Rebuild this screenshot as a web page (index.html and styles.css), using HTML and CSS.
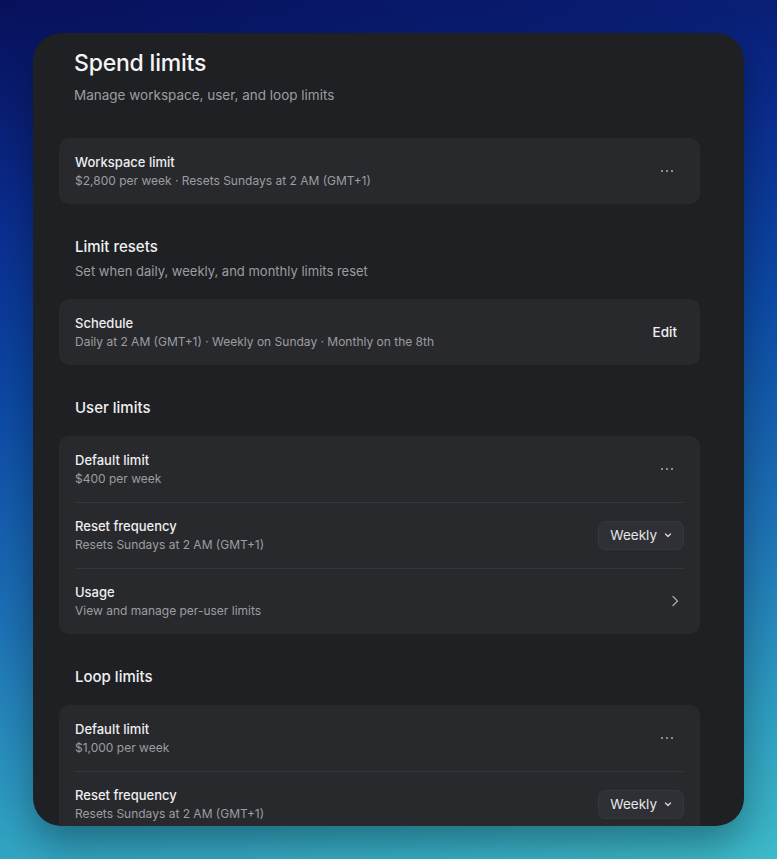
FILE: index.html
```html
<!DOCTYPE html>
<html lang="en">
<head>
    <meta charset="UTF-8">
    <meta name="viewport" content="width=device-width, initial-scale=1.0">
    <title>Spend limits</title>
    <link rel="stylesheet" href="styles.css">
</head>
<body>
    <div class="panel">
        <div class="content">
            <div class="page-header">
                <h1>Spend limits</h1>
                <p class="page-sub">Manage workspace, user, and loop limits</p>
            </div>

            <div class="card">
                <div class="row">
                    <div class="row-text">
                        <div class="row-title">Workspace limit</div>
                        <div class="row-sub">$2,800 per week · Resets Sundays at 2 AM (GMT+1)</div>
                    </div>
                    <button class="icon-btn" aria-label="More">
                        <svg width="16" height="16" viewBox="0 0 16 16"><circle cx="3" cy="8" r="1.1"/><circle cx="8" cy="8" r="1.1"/><circle cx="13" cy="8" r="1.1"/></svg>
                    </button>
                </div>
            </div>

            <div class="section">
                <div class="section-head">
                    <h2>Limit resets</h2>
                    <p class="section-sub">Set when daily, weekly, and monthly limits reset</p>
                </div>
                <div class="card">
                    <div class="row">
                        <div class="row-text">
                            <div class="row-title">Schedule</div>
                            <div class="row-sub">Daily at 2 AM (GMT+1) · Weekly on Sunday · Monthly on the 8th</div>
                        </div>
                        <button class="text-btn">Edit</button>
                    </div>
                </div>
            </div>

            <div class="section">
                <div class="section-head">
                    <h2>User limits</h2>
                </div>
                <div class="card">
                    <div class="row">
                        <div class="row-text">
                            <div class="row-title">Default limit</div>
                            <div class="row-sub">$400 per week</div>
                        </div>
                        <button class="icon-btn" aria-label="More">
                            <svg width="16" height="16" viewBox="0 0 16 16"><circle cx="3" cy="8" r="1.1"/><circle cx="8" cy="8" r="1.1"/><circle cx="13" cy="8" r="1.1"/></svg>
                        </button>
                    </div>
                    <div class="row">
                        <div class="row-text">
                            <div class="row-title">Reset frequency</div>
                            <div class="row-sub">Resets Sundays at 2 AM (GMT+1)</div>
                        </div>
                        <button class="select">
                            Weekly
                            <svg width="10" height="10" viewBox="0 0 10 10"><path d="M2.5 4l2.5 2.5L7.5 4"/></svg>
                        </button>
                    </div>
                    <div class="row">
                        <div class="row-text">
                            <div class="row-title">Usage</div>
                            <div class="row-sub">View and manage per-user limits</div>
                        </div>
                        <span class="chevron">
                            <svg width="16" height="16" viewBox="0 0 16 16"><path d="M6 3.5l4.5 4.5L6 12.5"/></svg>
                        </span>
                    </div>
                </div>
            </div>

            <div class="section">
                <div class="section-head">
                    <h2>Loop limits</h2>
                </div>
                <div class="card">
                    <div class="row">
                        <div class="row-text">
                            <div class="row-title">Default limit</div>
                            <div class="row-sub">$1,000 per week</div>
                        </div>
                        <button class="icon-btn" aria-label="More">
                            <svg width="16" height="16" viewBox="0 0 16 16"><circle cx="3" cy="8" r="1.1"/><circle cx="8" cy="8" r="1.1"/><circle cx="13" cy="8" r="1.1"/></svg>
                        </button>
                    </div>
                    <div class="row">
                        <div class="row-text">
                            <div class="row-title">Reset frequency</div>
                            <div class="row-sub">Resets Sundays at 2 AM (GMT+1)</div>
                        </div>
                        <button class="select">
                            Weekly
                            <svg width="10" height="10" viewBox="0 0 10 10"><path d="M2.5 4l2.5 2.5L7.5 4"/></svg>
                        </button>
                    </div>
                </div>
            </div>
        </div>
    </div>
</body>
</html>
```

FILE: styles.css
```css
* {
    margin: 0;
    padding: 0;
    box-sizing: border-box;
}
html, body {
    height: 100%;
}
body {
    font-family: Inter, "Noto Sans", "Liberation Sans", sans-serif;
    background: linear-gradient(172deg, #08105a 0%, #0a2c8e 22%, #0c4aa6 42%, #1d72b6 65%, #2f9fc2 85%, #3dbbca 100%);
    color: #ececee;
    padding: 33px;
    overflow: hidden;
}
.panel {
    height: 100%;
    background: #1f2023;
    border-radius: 28px;
    overflow: hidden;
    box-shadow: 0 18px 40px rgba(0, 0, 0, 0.35);
}
.content {
    padding: 15px 44px 0 26px;
}
.page-header {
    padding: 0 15px;
    margin-bottom: 33px;
}
h1 {
    font-size: 23px;
    line-height: 30px;
    font-weight: 500;
    color: #f4f4f5;
    letter-spacing: -0.2px;
}
.page-sub {
    margin-top: 7px;
    font-size: 13.5px;
    line-height: 20px;
    color: #9c9da2;
}
.section {
    margin-top: 33px;
}
.section-head {
    padding: 0 16px;
    margin-bottom: 18px;
}
h2 {
    font-size: 15px;
    line-height: 20px;
    font-weight: 500;
    color: #f0f0f2;
}
.section-sub {
    margin-top: 4px;
    font-size: 13px;
    line-height: 20px;
    color: #9c9da2;
}
.card {
    background: #28292d;
    border-radius: 10px;
    padding: 0 16px;
}
.row {
    display: flex;
    align-items: center;
    justify-content: space-between;
    padding: 14px 0;
}
.row + .row {
    border-top: 1px solid #35363b;
    padding-top: 13px;
}
.row-title {
    font-size: 13px;
    line-height: 20px;
    font-weight: 500;
    color: #eeeef0;
}
.row-sub {
    font-size: 12px;
    line-height: 18px;
    color: #9c9da2;
}
button {
    font-family: inherit;
    border: none;
    background: none;
    cursor: pointer;
}
.icon-btn {
    width: 28px;
    height: 28px;
    margin-right: 3px;
    display: flex;
    align-items: center;
    justify-content: center;
    fill: #a3a4a9;
}
.text-btn {
    font-size: 13.5px;
    font-weight: 500;
    color: #f0f0f2;
    padding: 6px 7px;
}
.select {
    display: flex;
    align-items: center;
    gap: 6px;
    height: 29px;
    padding: 0 10px 0 11px;
    background: #2f3035;
    border: 1px solid #36373c;
    border-radius: 7px;
    color: #e6e6e8;
    font-size: 13.5px;
}
.select svg {
    fill: none;
    stroke: #d0d0d3;
    stroke-width: 1.4;
    stroke-linecap: round;
    stroke-linejoin: round;
}
.chevron {
    display: flex;
    margin-right: 1px;
}
.chevron svg {
    fill: none;
    stroke: #a3a4a9;
    stroke-width: 1.4;
    stroke-linecap: round;
    stroke-linejoin: round;
}
```
